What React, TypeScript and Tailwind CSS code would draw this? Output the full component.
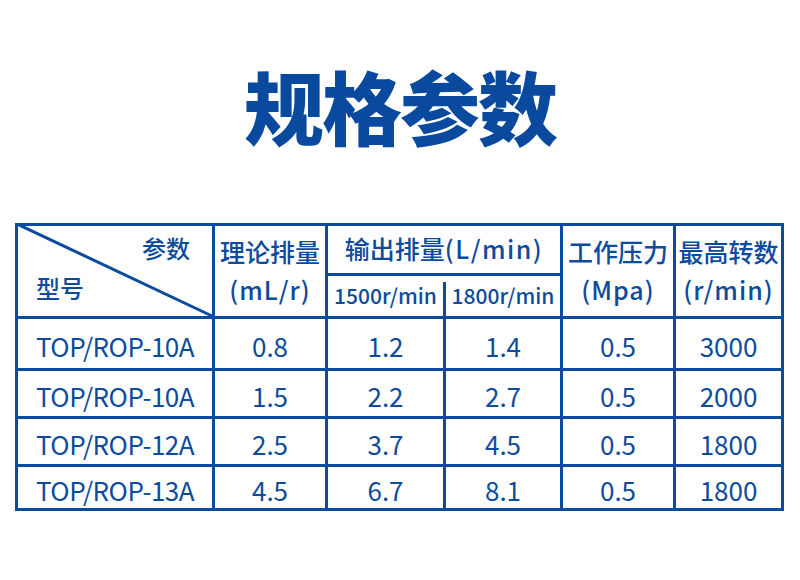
import React from "react";

interface IRow {
  model: string;
  disp: string;
  out1500: string;
  out1800: string;
  pressure: string;
  speed: string;
}

const rows: IRow[] = [
  { model: "TOP/ROP-10A", disp: "0.8", out1500: "1.2", out1800: "1.4", pressure: "0.5", speed: "3000" },
  { model: "TOP/ROP-10A", disp: "1.5", out1500: "2.2", out1800: "2.7", pressure: "0.5", speed: "2000" },
  { model: "TOP/ROP-12A", disp: "2.5", out1500: "3.7", out1800: "4.5", pressure: "0.5", speed: "1800" },
  { model: "TOP/ROP-13A", disp: "4.5", out1500: "6.7", out1800: "8.1", pressure: "0.5", speed: "1800" },
];

const font = { fontFamily: '"Noto Sans CJK SC", "Noto Sans", sans-serif' };

const App = () => {
  return (
    <div className="w-[800px] h-[580px] bg-white text-[#0d4b9d]" style={font}>
      <div className="h-[223px] flex justify-center pt-[50px]">
        <h1 className="text-[80px] leading-[108px] font-black tracking-[-2px] text-[#0a4a9e]">规格参数</h1>
      </div>
      <div className="ml-[15px] w-[769px] p-[3px] bg-[#0b4a9e] grid grid-cols-[194px_110px_115px_114px_110px_105px] grid-rows-[47px_40px_49px_45px_45px_41px] gap-[3px]">
        {/* header */}
        <div className="row-span-2 bg-white relative">
          <svg className="absolute -left-[3px] -top-[3px]" width="200" height="96" viewBox="0 0 200 96">
            <line x1="0" y1="0" x2="197" y2="93" stroke="#0b4a9e" strokeWidth="3" />
          </svg>
          <span className="absolute right-[22px] top-[7px] text-[24px] leading-[30px] font-medium">参数</span>
          <span className="absolute left-[18px] top-[47px] text-[24px] leading-[30px] font-medium">型号</span>
        </div>
        <div className="row-span-2 bg-white flex flex-col items-center pt-[6px] text-[25px] leading-[38px] font-medium">
          <span>理论排量</span>
          <span className="tracking-[1px]">(mL/r)</span>
        </div>
        <div className="col-span-2 bg-white flex items-center justify-center pb-[2px] text-[25px] font-medium">
          输出排量<span className="tracking-[1.5px]">(L/min)</span>
        </div>
        <div className="row-span-2 bg-white flex flex-col items-center pt-[6px] text-[25px] leading-[38px] font-medium">
          <span>工作压力</span>
          <span className="tracking-[1px]">(Mpa)</span>
        </div>
        <div className="row-span-2 bg-white flex flex-col items-center pt-[6px] text-[25px] leading-[38px] font-medium">
          <span>最高转数</span>
          <span className="tracking-[1px]">(r/min)</span>
        </div>
        <div className="col-span-2 flex">
          <div className="w-[115px] bg-white flex items-center justify-center text-[21px] font-medium">1500r/min</div>
          <div className="w-[3px] flex flex-col">
            <div className="h-[6px] bg-white" />
            <div className="flex-1 bg-[#0b4a9e]" />
          </div>
          <div className="w-[114px] bg-white flex items-center justify-center text-[21px] font-medium">1800r/min</div>
        </div>
        {/* data */}
        {rows.map((r, i) => (
          <React.Fragment key={i}>
            <div className="bg-white flex items-center pl-[18px] pt-[4px] text-[26px] tracking-[-0.5px]">{r.model}</div>
            <div className="bg-white flex items-center justify-center pt-[4px] text-[26px]">{r.disp}</div>
            <div className="bg-white flex items-center justify-center pt-[4px] text-[26px]">{r.out1500}</div>
            <div className="bg-white flex items-center justify-center pt-[4px] text-[26px]">{r.out1800}</div>
            <div className="bg-white flex items-center justify-center pt-[4px] text-[26px]">{r.pressure}</div>
            <div className="bg-white flex items-center justify-center pt-[4px] text-[26px]">{r.speed}</div>
          </React.Fragment>
        ))}
      </div>
    </div>
  );
};

export default App;
